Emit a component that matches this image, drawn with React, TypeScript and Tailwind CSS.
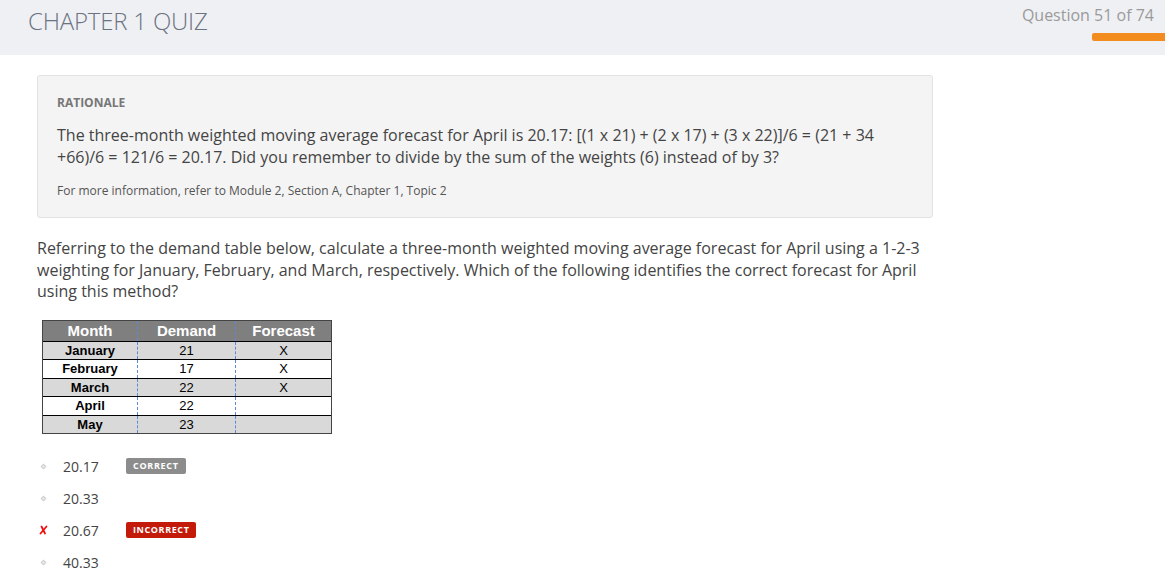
import React from "react";

const ROWS = [
  { month: "January", demand: "21", forecast: "X", shade: true },
  { month: "February", demand: "17", forecast: "X", shade: false },
  { month: "March", demand: "22", forecast: "X", shade: true },
  { month: "April", demand: "22", forecast: "", shade: false },
  { month: "May", demand: "23", forecast: "", shade: true },
];

const ANSWERS = [
  { text: "20.17", badge: "correct" },
  { text: "20.33", badge: null },
  { text: "20.67", badge: "incorrect" },
  { text: "40.33", badge: null },
];

function Bullet() {
  return (
    <svg width="7" height="7" viewBox="0 0 7 7" className="block">
      <path d="M3.5 0.5 L6.5 3.5 L3.5 6.5 L0.5 3.5 Z" fill="#cfcfcf" />
      <path d="M3.5 2.2 L4.8 3.5 L3.5 4.8 L2.2 3.5 Z" fill="#f2f2f2" />
    </svg>
  );
}

function Cross() {
  return (
    <svg width="9" height="10" viewBox="0 0 9 10" className="block">
      <path d="M2.5 1.5 L6 8.5" stroke="#ee1111" strokeWidth="1.8" strokeLinecap="round" />
      <path d="M7.5 1.5 L1.5 8.5" stroke="#ee1111" strokeWidth="1.8" strokeLinecap="round" />
    </svg>
  );
}

function DemandTable() {
  return (
    <div className="ml-[42px] mt-[17px] w-[290px] border border-[#444] font-['Liberation_Sans',Arial,sans-serif] leading-none">
      <div className="grid h-[20px] grid-cols-[95px_98px_1fr] bg-[#7f7f7f] text-[15px] font-bold text-white">
        <div className="flex items-center justify-center border-r border-dashed border-[#5b8bd8]">Month</div>
        <div className="flex items-center justify-center border-r border-dashed border-[#5b8bd8]">Demand</div>
        <div className="flex items-center justify-center">Forecast</div>
      </div>
      {ROWS.map((r) => (
        <div
          key={r.month}
          className={`grid h-[18.5px] grid-cols-[95px_98px_1fr] border-t-[1.5px] border-black text-[13px] text-black ${r.shade ? "bg-[#d9d9d9]" : "bg-white"}`}
        >
          <div className="flex items-center justify-center border-r border-dashed border-[#5b8bd8] font-bold">{r.month}</div>
          <div className="flex items-center justify-center border-r border-dashed border-[#5b8bd8]">{r.demand}</div>
          <div className="flex items-center justify-center">{r.forecast}</div>
        </div>
      ))}
    </div>
  );
}

export default function App() {
  return (
    <div className="h-[569px] w-[1165px] overflow-hidden bg-white font-['Open_Sans',sans-serif] text-[#444]">
      <header className="flex h-[55px] items-start justify-between bg-[#eff0f4]">
        <h1 className="ml-[28px] mt-[3px] text-[24px] font-light tracking-[-0.2px] text-[#6b7280]">CHAPTER 1 QUIZ</h1>
        <div className="flex flex-col items-end">
          <div className="mr-[11px] mt-[3px] text-[16px] text-[#9a9a9a]">Question 51 of 74</div>
          <div className="mt-[6px] h-[8px] w-[73px] rounded-l-[2px] bg-[#f28c1f]" />
        </div>
      </header>

      <section className="ml-[37px] mt-[20px] w-[896px] rounded-[3px] border border-[#e2e2e2] bg-[#f4f4f4] px-[19px] pb-[18px] pt-[19px]">
        <div className="text-[12px] font-bold leading-[16px] text-[#777]">RATIONALE</div>
        <p className="mt-[13px] text-[16px] leading-[22px] text-[#444]">
          The three-month weighted moving average forecast for April is 20.17: [(1 x 21) + (2 x 17) + (3 x 22)]/6 = (21 + 34
          <br />
          +66)/6 = 121/6 = 20.17. Did you remember to divide by the sum of the weights (6) instead of by 3?
        </p>
        <p className="mt-[15px] text-[12px] leading-[16px] text-[#555]">
          For more information, refer to Module 2, Section A, Chapter 1, Topic 2
        </p>
      </section>

      <p className="ml-[37px] mt-[20px] w-[890px] text-[16px] leading-[21.5px] text-[#444]">
        Referring to the demand table below, calculate a three-month weighted moving average forecast for April using a 1-2-3 weighting for January, February, and March, respectively. Which of the following identifies the correct forecast for April using this method?
      </p>

      <DemandTable />

      <ul className="mt-[16px]">
        {ANSWERS.map((a) => (
          <li key={a.text} className="flex h-[32px] items-center">
            <div className="flex w-[63px] justify-start pl-[39px]">
              {a.badge === "incorrect" ? <Cross /> : <span className="pl-[1px]"><Bullet /></span>}
            </div>
            <span className="w-[63px] text-[14px] text-[#444]">{a.text}</span>
            {a.badge === "correct" && (
              <span className="rounded-[2px] bg-[#8c8c8c] px-[7px] py-[2px] text-[9px] font-bold leading-[12px] tracking-[0.7px] text-white">CORRECT</span>
            )}
            {a.badge === "incorrect" && (
              <span className="rounded-[2px] bg-[#c31a0a] px-[7px] py-[2px] text-[9px] font-bold leading-[12px] tracking-[0.6px] text-white">INCORRECT</span>
            )}
          </li>
        ))}
      </ul>
    </div>
  );
}
